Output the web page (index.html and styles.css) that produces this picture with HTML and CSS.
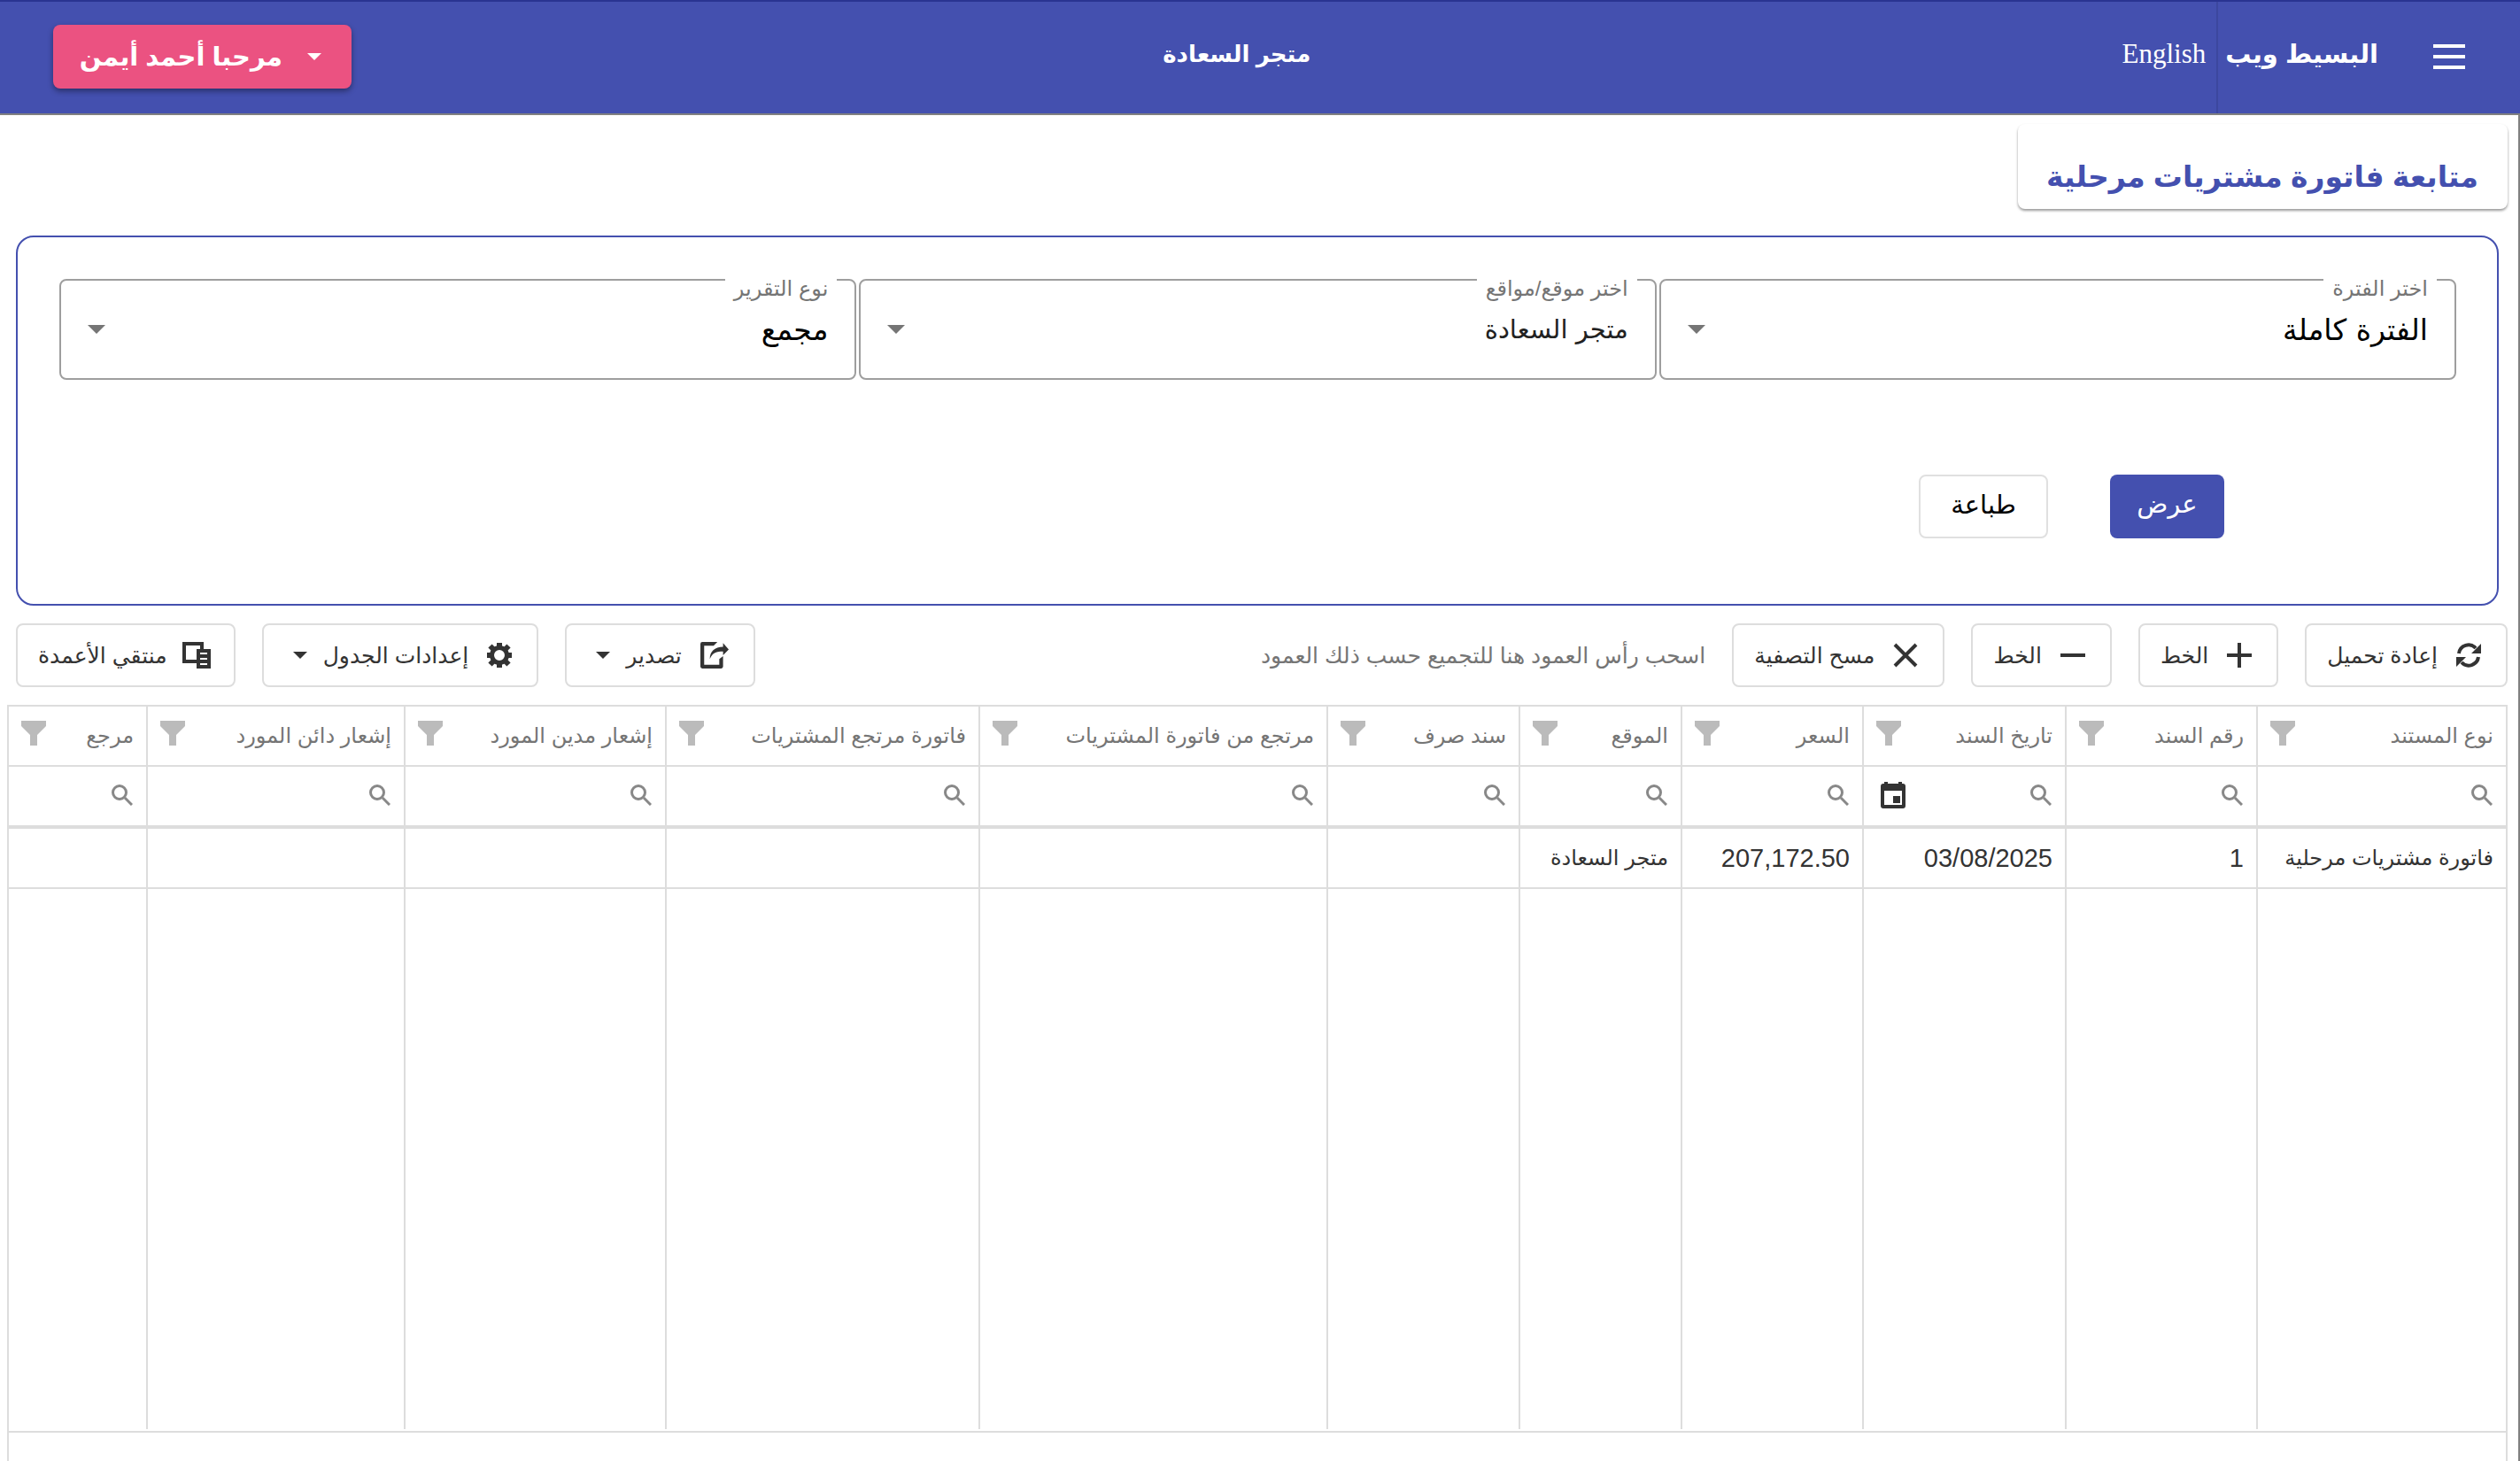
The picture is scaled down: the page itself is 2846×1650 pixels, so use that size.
FILE: index.html
```html
<!DOCTYPE html>
<html lang="ar" dir="rtl">
<head>
<meta charset="utf-8">
<title>متابعة فاتورة مشتريات مرحلية</title>
<link rel="stylesheet" href="styles.css">
</head>
<body>
<svg class="sprite" aria-hidden="true">
  <symbol id="i-filter" viewBox="0 0 28 30"><path d="M0 0h28v6L18 16v12h-8V16L0 6z"/></symbol>
  <symbol id="i-search" viewBox="0 0 24 24"><path fill="none" stroke="currentColor" stroke-width="3" d="M15 15l8 8"/><circle cx="9" cy="9" r="7.500" fill="none" stroke="currentColor" stroke-width="3"/></symbol>
</svg>
<header class="appbar">
  <button class="menu" aria-label="القائمة"><span></span><span></span><span></span></button>
  <h1 class="brand">البسيط ويب</h1>
  <a class="lang" href="#">English</a>
  <p class="store">متجر السعادة</p>
  <button class="user"><i class="caret"></i>مرحبا أحمد أيمن</button>
</header>
<main class="page">
  <h2 class="title">متابعة فاتورة مشتريات مرحلية</h2>
  <form class="panel">
    <div class="fields">
      <div class="field"><label for="f1">اختر الفترة</label><select id="f1"><option>الفترة كاملة</option></select></div>
      <div class="field"><label for="f2">اختر موقع/مواقع</label><select id="f2" class="alt"><option>متجر السعادة</option></select></div>
      <div class="field"><label for="f3">نوع التقرير</label><select id="f3"><option>مجمع</option></select></div>
    </div>
    <div class="actions">
      <button type="button" class="primary">عرض</button>
      <button type="button" class="plain">طباعة</button>
    </div>
  </form>
  <div class="toolbar">
    <button>
      <svg viewBox="0 0 28 28"><path fill="none" stroke="currentColor" stroke-width="4" d="M3 12a11 11 0 0 1 19-6M25 16a11 11 0 0 1-19 6"/><path d="M28 1v11H17zM0 27V16h11z"/></svg>إعادة تحميل</button>
    <button><svg viewBox="0 0 28 28"><path d="M12 0h4v12h12v4H16v12h-4V16H0v-4h12z"/></svg>الخط</button>
    <button><svg viewBox="0 0 28 28"><path d="M0 12h28v4H0z"/></svg>الخط</button>
    <button><svg viewBox="0 0 28 28"><path fill="none" stroke="currentColor" stroke-width="4" d="M2 2l24 24M26 2L2 26"/></svg>مسح التصفية</button>
    <p class="hint">اسحب رأس العمود هنا للتجميع حسب ذلك العمود</p>
    <button class="drop"><svg class="wide" viewBox="0 0 30 28"><path d="M2 0h16l-4 4H4v20h16v-6l4-3v11q0 2-2 2H2q-2 0-2-2V2q0-2 2-2z"/><path d="M24 1l6 7-6 6v-4c-7 0-11 1-14 8 0-8 5-13 14-13z"/></svg>تصدير<i class="caret"></i></button>
    <button class="drop"><svg viewBox="-14 -14 28 28"><circle r="8.500" fill="none" stroke="currentColor" stroke-width="5"/><path fill="none" stroke="currentColor" stroke-width="6" d="M0-14v5M0 14v-5M-14 0h5M14 0h-5M-10.500-10.500l4 4M10.500 10.500l-4-4M-10.500 10.500l4-4M10.500-10.500l-4 4"/></svg>إعدادات الجدول<i class="caret"></i></button>
    <button class="chooser"><svg class="wide" viewBox="0 0 32 30"><path fill-rule="evenodd" d="M0 0h24v8h8v22H16v-6H0zM4 4v16h12V8h4V4zM20 12v2h8v-2zM20 18v2h8v-2zM20 24v2h8v-2z"/></svg>منتقي الأعمدة</button>
  </div>
  <div class="grid">
    <table>
      <colgroup><col class="c1"><col class="c2"><col class="c3"><col class="c4"><col class="c5"><col class="c6"><col class="c7"><col class="c8"><col class="c9"><col class="c10"><col></colgroup>
      <thead>
        <tr>
          <th><div>نوع المستند<svg><use href="#i-filter"/></svg></div></th>
          <th><div>رقم السند<svg><use href="#i-filter"/></svg></div></th>
          <th><div>تاريخ السند<svg><use href="#i-filter"/></svg></div></th>
          <th><div>السعر<svg><use href="#i-filter"/></svg></div></th>
          <th><div>الموقع<svg><use href="#i-filter"/></svg></div></th>
          <th><div>سند صرف<svg><use href="#i-filter"/></svg></div></th>
          <th><div>مرتجع من فاتورة المشتريات<svg><use href="#i-filter"/></svg></div></th>
          <th><div>فاتورة مرتجع المشتريات<svg><use href="#i-filter"/></svg></div></th>
          <th><div>إشعار مدين المورد<svg><use href="#i-filter"/></svg></div></th>
          <th><div>إشعار دائن المورد<svg><use href="#i-filter"/></svg></div></th>
          <th><div>مرجع<svg><use href="#i-filter"/></svg></div></th>
        </tr>
      </thead>
      <tbody>
        <tr class="search">
          <td><div><svg><use href="#i-search"/></svg><input aria-label="نوع المستند"></div></td>
          <td><div><svg><use href="#i-search"/></svg><input aria-label="رقم السند"></div></td>
          <td><div><svg><use href="#i-search"/></svg><input aria-label="تاريخ السند"><button class="cal" aria-label="اختر التاريخ"><svg viewBox="0 0 28 30"><path fill-rule="evenodd" d="M4 0h4v2h12V0h4v2h1q3 0 3 3v22q0 3-3 3H3q-3 0-3-3V5q0-3 3-3h1zM4 10v16h20V10zM14 16h8v8h-8z"/></svg></button></div></td>
          <td><div><svg><use href="#i-search"/></svg><input aria-label="السعر"></div></td>
          <td><div><svg><use href="#i-search"/></svg><input aria-label="الموقع"></div></td>
          <td><div><svg><use href="#i-search"/></svg><input aria-label="سند صرف"></div></td>
          <td><div><svg><use href="#i-search"/></svg><input aria-label="مرتجع من فاتورة المشتريات"></div></td>
          <td><div><svg><use href="#i-search"/></svg><input aria-label="فاتورة مرتجع المشتريات"></div></td>
          <td><div><svg><use href="#i-search"/></svg><input aria-label="إشعار مدين المورد"></div></td>
          <td><div><svg><use href="#i-search"/></svg><input aria-label="إشعار دائن المورد"></div></td>
          <td><div><svg><use href="#i-search"/></svg><input aria-label="مرجع"></div></td>
        </tr>
        <tr class="data">
          <td>فاتورة مشتريات مرحلية</td><td class="num">1</td><td class="num">03/08/2025</td><td class="num">207,172.50</td><td>متجر السعادة</td><td></td><td></td><td></td><td></td><td></td><td></td>
        </tr>
        <tr class="rest"><td></td><td></td><td></td><td></td><td></td><td></td><td></td><td></td><td></td><td></td><td></td></tr>
      </tbody>
    </table>
    <footer class="gridfoot"></footer>
  </div>
</main>
</body>
</html>
```
FILE: styles.css
```css
* { box-sizing: border-box; margin: 0; }
body {
  height: 100vh;
  display: flex;
  flex-direction: column;
  overflow: hidden;
  background: #fff;
  color: #333;
  font-family: "Liberation Sans", "DejaVu Sans", sans-serif;
  font-size: 24px;
}
button { font: inherit; color: inherit; background: #fff; border: 0; padding: 0; }
svg { fill: currentColor; flex: none; }
.sprite { display: none; }
.caret { border: 8px solid transparent; border-top-color: currentColor; border-bottom: 0; }

.appbar {
  height: 130px;
  flex: none;
  display: flex;
  align-items: stretch;
  background: #4450af;
  color: #fff;
  border-top: 2px solid #2a3491;
  border-bottom: 2px solid #808080;
  padding: 0 60px;
  line-height: 118px;
}
.menu { background: none; width: 40px; padding: 0 2px 2px; display: flex; flex-direction: column; justify-content: center; gap: 8px; }
.menu span { height: 4px; background: #fff; }
.brand { font-size: 29px; font-weight: bold; margin-right: 60px; padding-left: 8px; border-left: 2px solid #3c479f; }
.lang { font: 31px/118px "Liberation Serif", serif; color: #fff; text-decoration: none; margin-right: 12px; }
.store { flex: 1; font-size: 26px; font-weight: bold; text-align: center; }
.user {
  align-self: flex-start;
  margin-top: 26px;
  height: 72px;
  width: 337px;
  display: flex;
  align-items: center;
  gap: 28px;
  padding: 0 34px;
  line-height: 64px;
  font-size: 29px;
  font-weight: bold;
  background: #eb5281;
  border-radius: 8px;
  box-shadow: 0 3px 6px rgba(0,0,0,.4);
  white-space: nowrap;
}

.page { flex: 1; min-height: 0; display: flex; flex-direction: column; padding: 10px 12px 0 8px; border-right: 2px solid #808080; }
.title {
  align-self: flex-start;
  width: 553px;
  height: 96px;
  padding: 12px 33px 0;
  font-size: 33px;
  line-height: 96px;
  color: #4450af;
  border-radius: 8px;
  box-shadow: 0 2px 3px rgba(0,0,0,.4);
  white-space: nowrap;
}
.panel { margin: 30px 10px 0; height: 418px; border: 2px solid #4450af; border-radius: 20px; padding: 47px 46px 47px 47px; }
.fields { display: grid; grid-template-columns: 1fr 1fr 1fr; gap: 3px; }
.field { position: relative; height: 114px; }
.field select {
  appearance: none;
  width: 100%;
  height: 100%;
  border: 2px solid #9e9e9e;
  border-radius: 8px;
  background: none;
  padding: 0 30px;
  font: 33px "DejaVu Sans", sans-serif;
  color: #000;
}
.field select.alt { font-size: 29px; color: #222; }
.field label { position: absolute; top: 0; right: 22px; padding: 0 10px; background: #fff; color: #757575; font-size: 24px; line-height: 22px; }
.field::after { content: ""; position: absolute; left: 32px; top: 52px; border: 10px solid transparent; border-top-color: #757575; border-bottom: 0; }
.actions { display: flex; gap: 70px; margin: 107px 262px 0 0; }
.actions button { height: 72px; border-radius: 8px; font-size: 29px; line-height: 64px; padding: 0 24px 6px; }
.primary { background: #4450af; color: #fff; width: 129px; }
.plain { border: 2px solid #e0e0e0; color: #000; width: 146px; }

.toolbar { display: flex; gap: 30px; margin: 20px 0 0 10px; height: 72px; font-size: 25px; }
.toolbar button { border: 2px solid #ddd; border-radius: 8px; display: flex; align-items: center; gap: 21px; padding: 0 28px 0 23px; white-space: nowrap; }
.toolbar .drop { padding-left: 33px; }
.toolbar .drop .caret { margin-right: -3px; }
.toolbar .chooser { gap: 17px; padding-right: 26px; }
.toolbar svg { width: 28px; height: 28px; }
.toolbar svg.wide { width: 32px; height: 30px; }
.hint { flex: 1; color: #757575; line-height: 72px; }

.grid { flex: 1; min-height: 0; margin-top: 20px; border: 2px solid #ddd; border-bottom: 0; display: flex; flex-direction: column; }
table { width: 100%; table-layout: fixed; border-spacing: 0; }
.c1 { width: 282px; } .c2 { width: 216px; } .c3 { width: 229px; } .c4 { width: 205px; } .c5 { width: 183px; } .c6 { width: 217px; }
.c7 { width: 393px; } .c8 { width: 354px; } .c9 { width: 295px; } .c10 { width: 291px; }
th, td { padding: 0 14px; border-left: 2px solid #ddd; border-bottom: 2px solid #ddd; text-align: right; white-space: nowrap; overflow: hidden; }
th:last-child, td:last-child { border-left: 0; }
th { height: 68px; color: #757575; font-weight: normal; }
th div, .search div { display: flex; align-items: center; justify-content: space-between; }
th svg { width: 28px; height: 30px; margin-bottom: 4px; color: #bbb; }
.search td { height: 70px; padding: 0 15px 2px 19px; border-bottom-width: 4px; }
.search div svg { width: 24px; height: 24px; color: #888; }
.search input { flex: 1; min-width: 0; border: 0; background: none; font: inherit; }
.search .cal svg { width: 28px; height: 30px; color: #333; display: block; }
.data td { height: 68px; }
.data .num { font-size: 29px; }
.rest td { height: 610px; border-bottom: 0; }
.gridfoot { border-top: 2px solid #ddd; margin-top: 2px; flex: 1; }
```
